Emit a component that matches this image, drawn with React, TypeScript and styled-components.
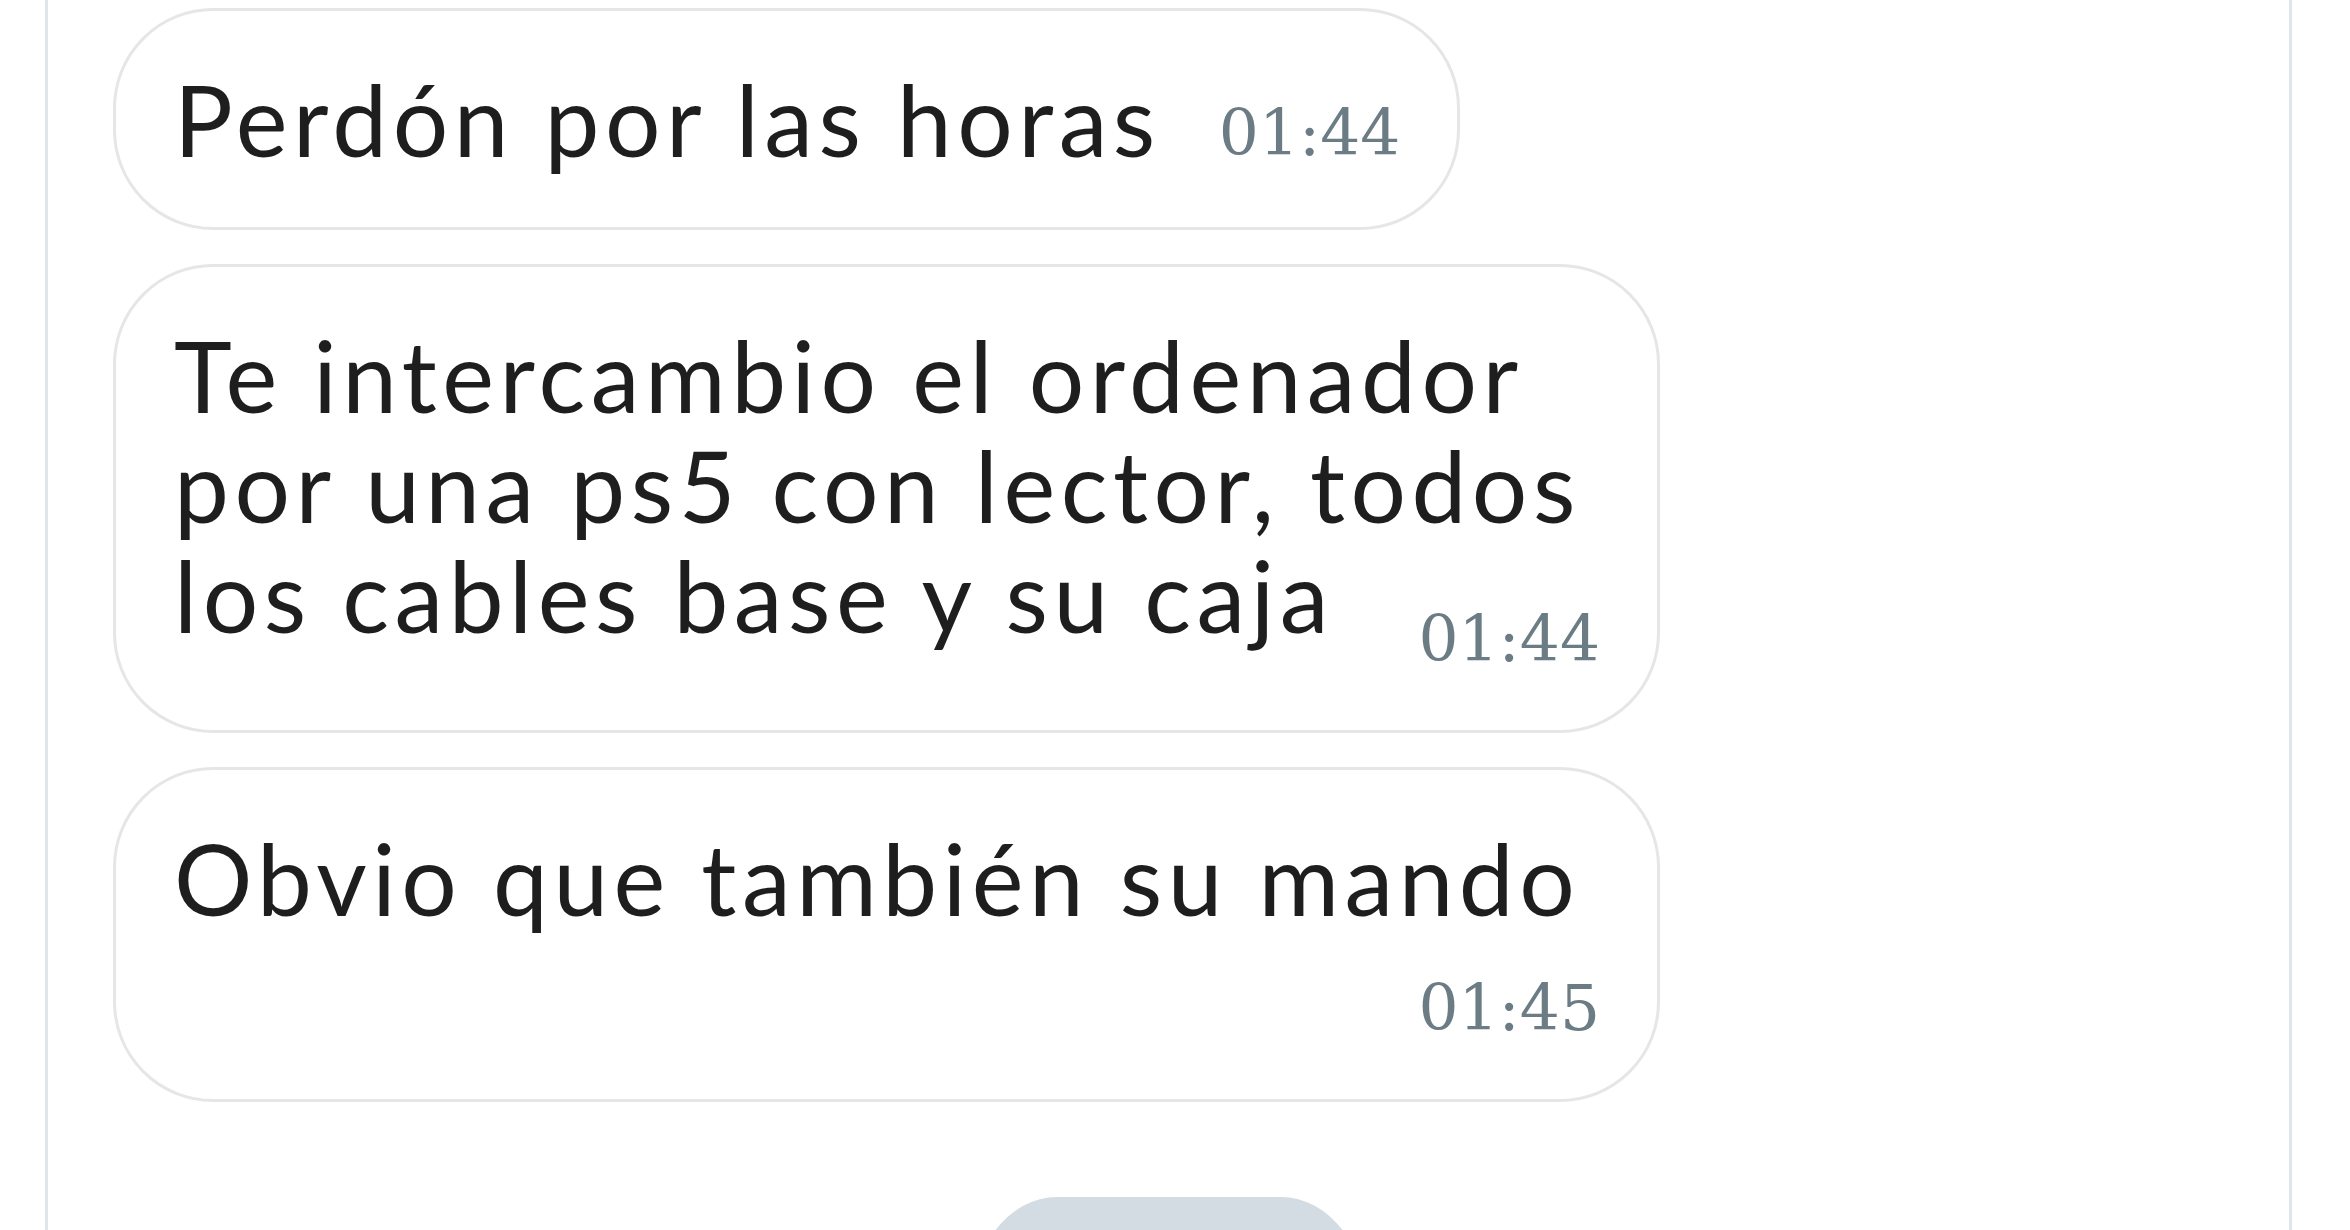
import React from 'react';
import styled, { createGlobalStyle } from 'styled-components';

const GlobalStyle = createGlobalStyle`
  html, body {
    margin: 0;
    padding: 0;
    background: #ffffff;
  }
  body {
    overflow: hidden;
  }
`;

const Panel = styled.div`
  box-sizing: border-box;
  width: 2247px;
  height: 1230px;
  margin-left: 45px;
  border-left: 3px solid #dfe5ea;
  border-right: 3px solid #dfe5ea;
  padding-top: 8px;
  display: flex;
  flex-direction: column;
  overflow: hidden;
  font-family: Lato, "Open Sans", sans-serif;
`;

const Thread = styled.div`
  display: flex;
  flex-direction: column;
  align-items: flex-start;
  gap: 34px;
  padding-left: 65px;
`;

const Bubble = styled.div`
  display: flow-root;
  box-sizing: border-box;
  max-width: 1547px;
  padding: 53px 57px 53px 58px;
  border: 3px solid #e4e6e8;
  border-radius: 100px;
  background: #ffffff;
  color: #1e1e1e;
  font-size: 98px;
  line-height: 110px;
  letter-spacing: 5.5px;
`;

const Text = styled.span``;

const Time = styled.span<{ $drop: number }>`
  float: right;
  margin: ${p => 32 + p.$drop}px 0 0 58px;
  font-family: "DejaVu Serif", serif;
  font-size: 63px;
  line-height: 75px;
  letter-spacing: 0;
  color: #6b7c85;
`;

const Chip = styled.div`
  align-self: center;
  flex-shrink: 0;
  margin-top: 95px;
  width: 400px;
  height: 240px;
  border-radius: 88px / 116px;
  background: #d3dce2;
`;

const messages = [
  { text: 'Perdón por las horas', time: '01:44', drop: 0 },
  { text: 'Te intercambio el ordenador por una ps5 con lector, todos los cables base y su caja', time: '01:44', drop: 30 },
  { text: 'Obvio que también su mando', time: '01:45', drop: 6 },
];

function App() {
  return (
    <>
      <GlobalStyle />
      <Panel>
        <Thread>
          {messages.map((m, i) => (
            <Bubble key={i}>
              <Text>{m.text}</Text>
              <Time $drop={m.drop}>{m.time}</Time>
            </Bubble>
          ))}
        </Thread>
        <Chip />
      </Panel>
    </>
  );
}

export default App;
